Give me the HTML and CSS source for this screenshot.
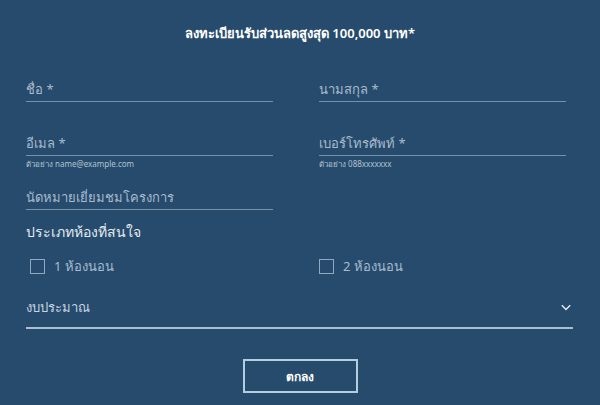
FILE: index.html
```html
<!DOCTYPE html>
<html lang="th">
<head>
<meta charset="utf-8">
<link rel="stylesheet" href="styles.css">
</head>
<body>
<div class="page">
  <h1 class="title">ลงทะเบียนรับส่วนลดสูงสุด 100,000 บาท*</h1>
  <div class="form">
    <div class="grid">
      <div class="field"><div class="input">ชื่อ *</div></div>
      <div class="field"><div class="input">นามสกุล *</div></div>
      <div class="field"><div class="input">อีเมล *</div><div class="help">ตัวอย่าง name@example.com</div></div>
      <div class="field"><div class="input">เบอร์โทรศัพท์ *</div><div class="help">ตัวอย่าง 088xxxxxxx</div></div>
      <div class="field field-short"><div class="input">นัดหมายเยี่ยมชมโครงการ</div></div>
    </div>
    <div class="section">ประเภทห้องที่สนใจ</div>
    <div class="checks">
      <label class="check"><span class="box"></span><span>1 ห้องนอน</span></label>
      <label class="check check-right"><span class="box"></span><span>2 ห้องนอน</span></label>
    </div>
    <div class="select">
      <span>งบประมาณ</span>
      <svg class="chev" width="10" height="7" viewBox="0 0 10 7"><path d="M0.8 1.2 L5 5.4 L9.2 1.2" fill="none" stroke="#e6eef5" stroke-width="1.4"/></svg>
    </div>
    <div class="actions"><button class="btn">ตกลง</button></div>
  </div>
</div>
</body>
</html>
```
FILE: styles.css
```css
* { box-sizing: border-box; }
html, body { margin: 0; padding: 0; }
body {
  background: #264b6d;
  font-family: "Noto Sans", "Liberation Sans", sans-serif;
  width: 600px;
  height: 405px;
  overflow: hidden;
}
.page { padding-top: 23px; }
.title {
  margin: 0;
  text-align: center;
  color: #ffffff;
  font-size: 13px;
  font-weight: 600;
  line-height: 20px;
}
.form { padding: 0 26px; }
.grid {
  display: grid;
  grid-template-columns: 247px 247px;
  column-gap: 46px;
  margin-top: 35px;
}
.field { height: 54px; }
.input {
  color: #a8bcce;
  font-size: 13px;
  line-height: 23px;
  border-bottom: 1px solid #7490ab;
}
.help {
  color: #b2c3d2;
  font-size: 8px;
  line-height: 12px;
  margin-top: 2px;
}
.field-short { height: 24px; }
.section {
  color: #e4ecf3;
  font-size: 14px;
  line-height: 20px;
  margin-top: 12px;
}
.checks {
  display: grid;
  grid-template-columns: 293px 1fr;
  margin-top: 16px;
}
.check {
  display: flex;
  align-items: center;
  gap: 9px;
  color: #a8bcce;
  font-size: 13px;
  line-height: 16px;
  padding-left: 4px;
}
.check-right { padding-left: 0; }
.box {
  width: 15px;
  height: 15px;
  border: 1px solid #8fa9c1;
}
.select {
  display: flex;
  justify-content: space-between;
  align-items: center;
  margin-top: 23px;
  width: 547px;
  line-height: 20px;
  color: #c9d6e2;
  font-size: 13px;
  border-bottom: 2px solid #a9bed2;
  padding-bottom: 10px;
}
.chev { margin-right: 2px; }
.actions {
  display: flex;
  justify-content: center;
  margin-top: 30px;
}
.btn {
  width: 115px;
  height: 34px;
  background: transparent;
  border: 2px solid #b4cde0;
  color: #ffffff;
  font-family: inherit;
  font-size: 12px;
  font-weight: 700;
}
```
